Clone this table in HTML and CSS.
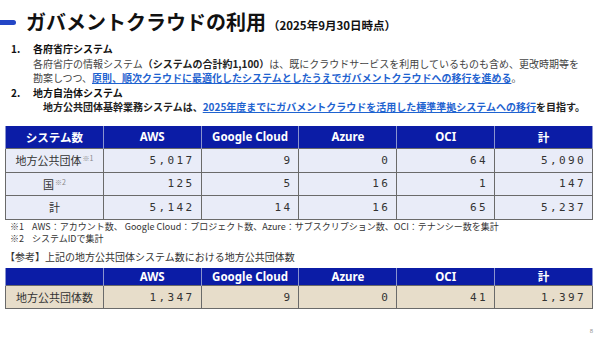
FILE: index.html
```html
<!DOCTYPE html>
<html lang="ja">
<head>
<meta charset="utf-8">
<link rel="stylesheet" href="styles.css">
</head>
<body>
<div class="slide">
  <header class="title-row">
    <span class="bar"></span>
    <h1 class="title">ガバメントクラウドの利用</h1>
    <span class="sub">（2025年9月30日時点）</span>
  </header>

  <div class="items">
    <div class="item-head"><span class="num">1.</span><span>各府省庁システム</span></div>
    <p class="body">各府省庁の情報システム<b>（システムの合計約1,100）</b>は、既にクラウドサービスを利用しているものも含め、更改時期等を</p>
    <p class="body">勘案しつつ、<b class="link">原則、順次クラウドに最適化したシステムとしたうえでガバメントクラウドへの移行を進める</b>。</p>
    <div class="item-head"><span class="num">2.</span><span>地方自治体システム</span></div>
    <p class="body deep"><b>地方公共団体基幹業務システムは、</b><b class="link">2025年度までにガバメントクラウドを活用した標準準拠システムへの移行</b><b>を目指す。</b></p>
  </div>

  <table class="grid main">
    <thead>
      <tr><th>システム数</th><th>AWS</th><th>Google Cloud</th><th>Azure</th><th>OCI</th><th>計</th></tr>
    </thead>
    <tbody>
      <tr><td class="label">地方公共団体<sup>※1</sup></td><td class="n">5,017</td><td class="n">9</td><td class="n">0</td><td class="n">64</td><td class="n">5,090</td></tr>
      <tr><td class="label">国<sup>※2</sup></td><td class="n">125</td><td class="n">5</td><td class="n">16</td><td class="n">1</td><td class="n">147</td></tr>
      <tr><td class="label">計</td><td class="n">5,142</td><td class="n">14</td><td class="n">16</td><td class="n">65</td><td class="n">5,237</td></tr>
    </tbody>
  </table>

  <div class="notes">
    <p><span class="mark">※1</span>AWS：アカウント数、 Google Cloud：プロジェクト数、Azure：サブスクリプション数、OCI：テナンシー数を集計</p>
    <p><span class="mark">※2</span>システムIDで集計</p>
  </div>

  <p class="ref">【参考】上記の地方公共団体システム数における地方公共団体数</p>

  <table class="grid second">
    <thead>
      <tr><th></th><th>AWS</th><th>Google Cloud</th><th>Azure</th><th>OCI</th><th>計</th></tr>
    </thead>
    <tbody>
      <tr><td class="label">地方公共団体数</td><td class="n">1,347</td><td class="n">9</td><td class="n">0</td><td class="n">41</td><td class="n">1,397</td></tr>
    </tbody>
  </table>

  <span class="page">8</span>
</div>
</body>
</html>
```

FILE: styles.css
```css
* { box-sizing: border-box; }

body {
  margin: 0;
  background: #fff;
  font-family: "Noto Sans CJK JP", "Noto Sans", sans-serif;
  color: #333;
}

.slide {
  position: relative;
  width: 600px;
  height: 338px;
  overflow: hidden;
  background: #fff;
}

.title-row {
  display: flex;
  align-items: baseline;
  height: 30px;
  margin-top: 7px;
}

.bar {
  align-self: center;
  width: 16px;
  height: 5px;
  margin-right: 10px;
  background: #2346c6;
  border-radius: 0 3px 3px 0;
}

.title {
  margin: 0;
  font-size: 20px;
  line-height: 30px;
  font-weight: 700;
  color: #111;
}

.sub {
  margin-left: 2px;
  font-size: 11.5px;
  font-weight: 700;
  color: #111;
}

.items {
  margin-top: 5px;
  font-size: 10px;
  line-height: 14.5px;
}

.item-head {
  display: flex;
  font-weight: 700;
  color: #111;
}

.num {
  width: 33px;
  padding-left: 11px;
}

.body {
  margin: 0;
  padding-left: 33px;
  color: #444;
  white-space: nowrap;
}

.body b { color: #222; }

.body.deep { padding-left: 43px; }

.body .link {
  color: #1f63d0;
  text-decoration: underline;
  text-underline-offset: 1px;
}

.grid {
  width: 588px;
  margin-left: 5px;
  border-collapse: collapse;
  table-layout: fixed;
}

.grid th {
  background: #0b1ca6;
  color: #fff;
  font-size: 11.5px;
  font-weight: 700;
  font-family: "Noto Sans", "Noto Sans CJK JP", sans-serif;
  padding: 0;
  border-left: 1px solid #8a94cf;
  border-right: 1px solid #8a94cf;
}

.grid th:first-child { font-family: "Noto Sans CJK JP", sans-serif; }

.grid td {
  padding: 0 6px;
  border: 1px solid #6a6a6a;
  color: #333;
  font-size: 11px;
}

.main { margin-top: 11px; }
.main th { height: 23px; }
.main td { height: 23.5px; background: #e9ecf8; }

.second { margin-top: 4px; }
.second th { height: 18px; }
.second td { height: 23px; background: #e7ddca; }

.grid .label {
  text-align: center;
  white-space: nowrap;
}

.grid .label sup {
  font-size: 7px;
  color: #888;
  vertical-align: 4px;
  margin-left: 1px;
}

.grid .n {
  text-align: right;
  font-family: "DejaVu Sans Mono", "Liberation Mono", monospace;
  font-size: 11px;
  letter-spacing: 2.4px;
  padding-right: 6px;
  color: #333;
}

.notes {
  margin-top: 1px;
  padding-left: 10px;
  font-size: 9px;
  line-height: 12px;
  color: #333;
}

.notes p { margin: 0; white-space: nowrap; }

.mark {
  display: inline-block;
  width: 22px;
}

.ref {
  margin: 5px 0 0 5px;
  font-size: 10px;
  line-height: 14px;
  color: #333;
}

.page {
  position: absolute;
  right: 7px;
  bottom: 4px;
  font-size: 6px;
  color: #999;
  font-family: "Liberation Sans", sans-serif;
}
```
